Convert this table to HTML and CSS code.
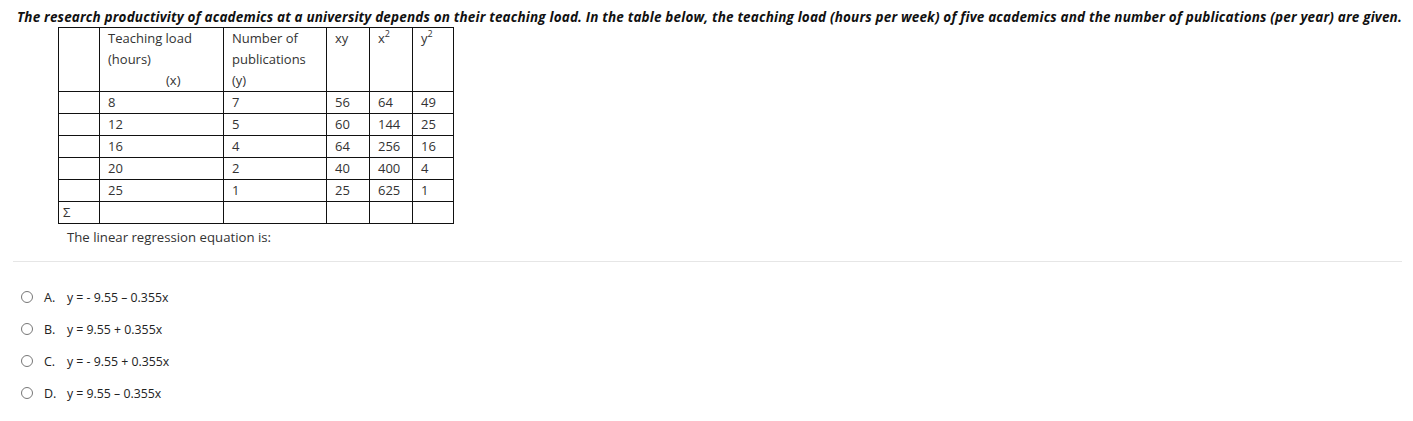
FILE: index.html
```html
<!DOCTYPE html>
<html>
<head>
<meta charset="utf-8">
<link rel="stylesheet" href="styles.css">
</head>
<body>
<div class="question">
  <p class="title">The research productivity of academics at a university depends on their teaching load. In the table below, the teaching load (hours per week) of five academics and the number of publications (per year) are given.</p>
  <table class="data">
    <tr class="head">
      <td class="c0"></td>
      <td class="c1">Teaching load<br>(hours)<br><span class="xlabel">(x)</span></td>
      <td class="c2">Number of<br>publications<br>(y)</td>
      <td class="c3">xy</td>
      <td class="c4">x<sup>2</sup></td>
      <td class="c5">y<sup>2</sup></td>
    </tr>
    <tr><td></td><td>8</td><td>7</td><td>56</td><td>64</td><td>49</td></tr>
    <tr><td></td><td>12</td><td>5</td><td>60</td><td>144</td><td>25</td></tr>
    <tr><td></td><td>16</td><td>4</td><td>64</td><td>256</td><td>16</td></tr>
    <tr><td></td><td>20</td><td>2</td><td>40</td><td>400</td><td>4</td></tr>
    <tr><td></td><td>25</td><td>1</td><td>25</td><td>625</td><td>1</td></tr>
    <tr class="sum"><td>Σ</td><td></td><td></td><td></td><td></td><td></td></tr>
  </table>
  <p class="eq">The linear regression equation is:</p>
</div>
<div class="divider"></div>
<ul class="options">
  <li><span class="radio"></span><span class="letter">A.</span><span class="ans">y = - 9.55 – 0.355x</span></li>
  <li><span class="radio"></span><span class="letter">B.</span><span class="ans">y = 9.55 + 0.355x</span></li>
  <li><span class="radio"></span><span class="letter">C.</span><span class="ans">y = - 9.55 + 0.355x</span></li>
  <li><span class="radio"></span><span class="letter">D.</span><span class="ans">y = 9.55 – 0.355x</span></li>
</ul>
</body>
</html>
```
FILE: styles.css
```css
html, body {
  margin: 0;
  padding: 0;
  background: #fff;
}
body {
  font-family: "Open Sans", "Noto Sans", "DejaVu Sans", sans-serif;
  color: #222;
  font-size: 12px;
}
.question {
  padding: 0;
}
.title {
  margin: 0;
  padding: 8px 0 0 17px;
  font-weight: 700;
  font-style: italic;
  font-size: 13.5px;
  letter-spacing: 0.17px;
  line-height: 18px;
  color: #111;
  white-space: nowrap;
}
.data {
  margin: 1px 0 0 58px;
  border-collapse: collapse;
}
.data td {
  border: 1px solid #111;
  padding: 0 8px;
  height: 21px;
  line-height: 21px;
  vertical-align: top;
  text-align: left;
  font-size: 13px;
  color: #333;
}
.data .head td {
  height: 63px;
}
.data .c0 { width: 24px; }
.data .c1 { width: 107px; }
.data .c2 { width: 86px; }
.data .c3 { width: 26px; }
.data .c4 { width: 26px; }
.data .c5 { width: 24px; }
.data sup {
  font-size: 9px;
  line-height: 0;
  vertical-align: 6px;
}
.xlabel {
  padding-left: 58px;
}
.sum td {
  padding-left: 4px;
}
.eq {
  margin: 0;
  padding: 5px 0 0 67px;
  font-size: 13.2px;
  line-height: 17px;
  color: #333;
}
.divider {
  margin: 15px 11px 0 13px;
  border-top: 1px solid #e6e6e6;
}
.options {
  list-style: none;
  margin: 0;
  padding: 19px 0 0 21px;
}
.options li {
  display: flex;
  align-items: center;
  height: 32px;
  color: #222;
}
.radio {
  width: 10px;
  height: 10px;
  border: 1px solid #777;
  border-radius: 50%;
  box-sizing: content-box;
  margin-right: 11px;
}
.letter {
  width: 23px;
  font-size: 12.5px;
}
.ans {
  font-size: 12.3px;
}
```
